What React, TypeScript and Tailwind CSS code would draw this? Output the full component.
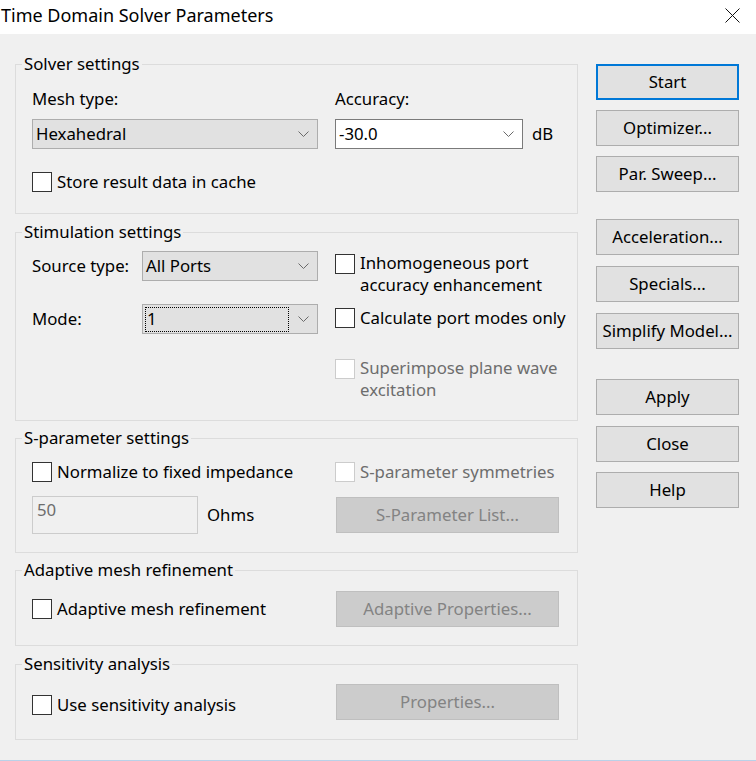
import React from "react";

const Chevron = () => (
  <svg width="11" height="6" viewBox="0 0 11 6" className="shrink-0">
    <polyline points="0.5,0.5 5.5,5.5 10.5,0.5" fill="none" stroke="#6a6a6a" strokeWidth="1" />
  </svg>
);

function Select({
  value,
  width,
  white,
  focus,
}: {
  value: string;
  width: string;
  white?: boolean;
  focus?: boolean;
}) {
  return (
    <div
      className={`${width} h-[30px] shrink-0 flex items-center border pr-[8px] ${
        white ? "bg-white border-[#7a7a7a]" : "bg-[#e1e1e1] border-[#adadad]"
      } ${focus ? "pl-[2px]" : "pl-[3px]"}`}
    >
      {focus ? (
        <span className="h-[25px] w-[144px] flex items-center pl-[1px] border border-dotted border-black">
          {value}
        </span>
      ) : (
        <span>{value}</span>
      )}
      <span className="ml-auto">
        <Chevron />
      </span>
    </div>
  );
}

function Box({ disabled }: { disabled?: boolean }) {
  return (
    <span
      className={`block w-[20px] h-[20px] shrink-0 bg-white border ${
        disabled ? "border-[#cccccc]" : "border-[#333333]"
      }`}
    />
  );
}

function Check({ label, disabled }: { label: string; disabled?: boolean }) {
  return (
    <div className="flex items-center h-[22px]">
      <Box disabled={disabled} />
      <span className={`ml-[5px] ${disabled ? "text-[#6d6d6d]" : ""}`}>{label}</span>
    </div>
  );
}

function Check2({ lines, disabled }: { lines: string[]; disabled?: boolean }) {
  return (
    <div className="flex items-start">
      <span className="mt-[2px]">
        <Box disabled={disabled} />
      </span>
      <div className={`ml-[5px] ${disabled ? "text-[#6d6d6d]" : ""}`}>
        {lines.map((l) => (
          <div key={l}>{l}</div>
        ))}
      </div>
    </div>
  );
}

function Group({
  title,
  className,
  children,
}: {
  title: string;
  className: string;
  children: React.ReactNode;
}) {
  return (
    <div className={`border border-[#dcdcdc] pl-[16px] ${className}`}>
      <div className="-mt-[12px] -ml-[10px] w-fit px-[2px] h-[22px] bg-[#f0f0f0]">{title}</div>
      {children}
    </div>
  );
}

function OffButton({ label }: { label: string }) {
  return (
    <div className="ml-[1px] w-[223px] h-[36px] shrink-0 flex items-center justify-center bg-[#cccccc] border border-[#bfbfbf] text-[#838383]">
      {label}
    </div>
  );
}

function Button({ label, className, primary }: { label: string; className?: string; primary?: boolean }) {
  return (
    <div
      className={`h-[36px] flex items-center justify-center bg-[#e1e1e1] ${
        primary ? "border-2 border-[#0078d7]" : "border border-[#adadad]"
      } ${className ?? ""}`}
    >
      {label}
    </div>
  );
}

export default function App() {
  return (
    <div className="w-[756px] h-[761px] flex flex-col overflow-hidden font-['Noto_Sans',sans-serif] text-[16.8px] leading-[22px] text-black">
      <div className="h-[34px] shrink-0 bg-white flex items-start pt-[3px] pl-[1px] pr-[16px]">
        <span className="text-[18px] leading-[24px]">Time Domain Solver Parameters</span>
        <svg width="15" height="15" viewBox="0 0 15 15" className="ml-auto mt-[5px]">
          <path d="M0.5 0.5 L14.5 14.5 M14.5 0.5 L0.5 14.5" stroke="#111" strokeWidth="1" fill="none" />
        </svg>
      </div>

      <div className="flex-1 bg-[#f0f0f0] flex pl-[15px] pt-[30px]">
        <div className="w-[563px] shrink-0">
          <Group title="Solver settings" className="h-[150px]">
            <div className="mt-[13px] flex h-[22px]">
              <div className="w-[303px]">Mesh type:</div>
              <div>Accuracy:</div>
            </div>
            <div className="mt-[9px] flex items-center">
              <div className="w-[303px]">
                <Select value="Hexahedral" width="w-[286px]" />
              </div>
              <Select value="-30.0" width="w-[188px]" white />
              <span className="ml-[9px]">dB</span>
            </div>
            <div className="mt-[22px]">
              <Check label="Store result data in cache" />
            </div>
          </Group>

          <Group title="Stimulation settings" className="mt-[18px] h-[189px]">
            <div className="mt-[8px] flex">
              <div className="w-[303px]">
                <div className="flex items-center h-[30px]">
                  <span className="w-[110px]">Source type:</span>
                  <Select value="All Ports" width="w-[176px]" />
                </div>
                <div className="mt-[23px] flex items-center h-[30px]">
                  <span className="w-[110px]">Mode:</span>
                  <Select value="1" width="w-[176px]" focus />
                </div>
              </div>
              <div>
                <div className="mt-[1px]">
                  <Check2 lines={["Inhomogeneous port", "accuracy enhancement"]} />
                </div>
                <div className="mt-[11px]">
                  <Check label="Calculate port modes only" />
                </div>
                <div className="mt-[28px]">
                  <Check2 lines={["Superimpose plane wave", "excitation"]} disabled />
                </div>
              </div>
            </div>
          </Group>

          <Group title="S-parameter settings" className="mt-[17px] h-[115px]">
            <div className="mt-[12px] flex">
              <div className="w-[303px]">
                <Check label="Normalize to fixed impedance" />
              </div>
              <Check label="S-parameter symmetries" disabled />
            </div>
            <div className="mt-[13px] flex items-start">
              <div className="w-[303px] flex items-center">
                <div className="w-[166px] h-[38px] border border-[#cccccc] pl-[4px] pt-[2px] text-[#6d6d6d]">50</div>
                <span className="ml-[9px]">Ohms</span>
              </div>
              <div className="mt-[1px]">
                <OffButton label="S-Parameter List..." />
              </div>
            </div>
          </Group>

          <Group title="Adaptive mesh refinement" className="mt-[17px] h-[76px]">
            <div className="mt-[10px] flex items-start">
              <div className="w-[303px] pt-[7px]">
                <Check label="Adaptive mesh refinement" />
              </div>
              <OffButton label="Adaptive Properties..." />
            </div>
          </Group>

          <Group title="Sensitivity analysis" className="mt-[18px] h-[76px]">
            <div className="mt-[9px] flex items-start">
              <div className="w-[303px] pt-[10px]">
                <Check label="Use sensitivity analysis" />
              </div>
              <OffButton label="Properties..." />
            </div>
          </Group>
        </div>

        <div className="ml-[18px] w-[143px] shrink-0">
          <Button label="Start" primary />
          <Button label="Optimizer..." className="mt-[10px]" />
          <Button label="Par. Sweep..." className="mt-[10px]" />
          <Button label="Acceleration..." className="mt-[27px]" />
          <Button label="Specials..." className="mt-[11px]" />
          <Button label="Simplify Model..." className="mt-[11px]" />
          <Button label="Apply" className="mt-[30px]" />
          <Button label="Close" className="mt-[11px]" />
          <Button label="Help" className="mt-[10px]" />
        </div>
      </div>
      <div className="h-[1px] shrink-0 bg-[#b9d1e8]" />
    </div>
  );
}
